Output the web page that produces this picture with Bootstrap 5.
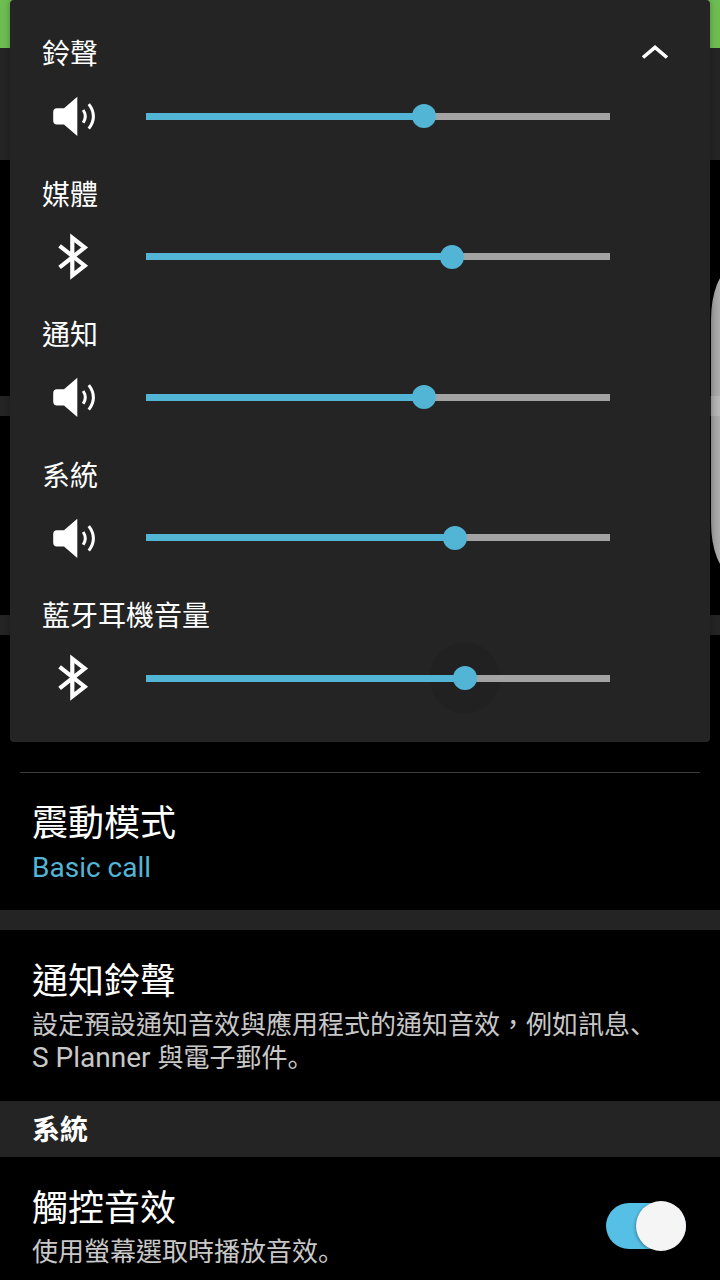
<!DOCTYPE html>
<html lang="zh-Hant">
<head>
<meta charset="utf-8">
<meta name="viewport" content="width=device-width, initial-scale=1">
<title>音效與震動</title>
<link href="https://cdn.jsdelivr.net/npm/bootstrap@5.3.0/dist/css/bootstrap.min.css" rel="stylesheet">
<style>
  :root { --surface: #242424; --accent: #52b5d6; --rail: #a3a3a3; }
  body { font-family: Roboto, "Noto Sans CJK TC", sans-serif; background: #000; color: #fff; }
  .status-strip { height: 48px; background: #6ebd52; }
  .title-strip { height: 112px; background: var(--surface); }
  .divider-strip { height: 20px; background: var(--surface); }
  .row-tall { height: 236px; }
  .row-mid { height: 199px; }
  .row-short { height: 137px; }
  .hairline { height: 1px; margin: 0 20px -1px; background: #3a3a3a; }

  .setting { padding: 25px 34px 26px 32px; }
  .setting-title { font-size: 36px; line-height: 54px; font-weight: 400; margin: 0; }
  .setting-note { font-size: 26px; line-height: 33px; margin: 0; color: #c8c8c8; }
  .setting-note .latin { font-size: 28px; line-height: 1; }
  .setting-note .stop { font-family: "Noto Sans CJK JP", sans-serif; line-height: 1; }
  .setting-value { font-size: 28px; line-height: 33px; color: var(--accent); }
  .group-title { background: var(--surface); font-size: 28px; line-height: 53px; font-weight: 700; padding: 3px 32px 0; margin: 0; }

  .volume-panel { min-height: 742px; margin: 0 10px; padding: 34px 32px 40px; background: var(--surface);
    border-radius: 4px; box-shadow: 0 1px 6px rgba(0, 0, 0, .3); }
  .volume-label { font-size: 28px; line-height: 42px; }
  .volume-control { height: 48px; margin-top: 16px; padding-right: 56px; }
  .volume-icon { width: 48px; height: 48px; margin-left: 7px; margin-right: 37px; }
  .collapse-btn { width: 48px; height: 36px; margin-right: -1px; }

  .volume-range { appearance: none; height: 72px; margin: 0; border: 0; outline: 0;
    --at: calc(12px + (100% - 24px) * var(--level));
    background:
      linear-gradient(to right, var(--accent) calc(100% * var(--level)), var(--rail) 0) center / calc(100% - 24px) 7px no-repeat; }
  .volume-range.touched { background:
      linear-gradient(to right, var(--accent) calc(100% * var(--level)), var(--rail) 0) center / calc(100% - 24px) 7px no-repeat,
      radial-gradient(circle at var(--at) 50%, #212121 35px, transparent 36px); }
  .volume-range::-webkit-slider-runnable-track { height: 24px; background: none; }
  .volume-range::-webkit-slider-thumb { appearance: none; width: 24px; height: 24px; border-radius: 50%; background: var(--accent); }

  .toggle { appearance: none; position: relative; width: 80px; height: 46px; margin: 0; border-radius: 23px; background: #444; }
  .toggle:checked { background: #56bfe5; }
  .toggle::before { content: ""; position: absolute; top: -2px; left: 0; width: 50px; height: 50px; border-radius: 50%;
    background: #f5f5f5; box-shadow: -1px 1px 3px rgba(0, 0, 0, .3); }
  .toggle:checked::before { left: auto; right: 0; }

  .edge-handle { top: 270px; width: 9px; height: 302px; }
  .edge-handle::before { content: ""; display: block; width: 40px; height: 100%; border-radius: 20px / 50px;
    background: linear-gradient(to right, rgba(255, 255, 255, .6), rgba(255, 255, 255, .68) 9px); }
</style>
</head>
<body>
<svg class="d-none" xmlns="http://www.w3.org/2000/svg">
  <symbol id="speaker" viewBox="0 0 48 48">
    <path d="M8 16.300h7L28.300 4.800V44L15 32.500H8Q4.200 32.500 4.200 28.500V20.300Q4.200 16.300 8 16.300Z" fill="#fff"/>
    <path d="M34.200 18Q38.400 24.400 34.200 30.800M39.800 12.200Q49 24.400 39.800 36.600" fill="none" stroke="#fff" stroke-width="3"/>
  </symbol>
  <symbol id="bluetooth" viewBox="0 0 48 48">
    <path d="M10.600 12.800L35.700 32.700L23.300 42.400V4.800L35.700 14.500L10.600 34.400" fill="none" stroke="#fff" stroke-width="4.200"/>
  </symbol>
</svg>

<div class="position-relative vh-100 overflow-hidden">
  <main>
    <div class="status-strip"></div>
    <div class="title-strip"></div>
    <div class="row-tall"></div>
    <div class="divider-strip"></div>
    <div class="row-mid"></div>
    <div class="divider-strip"></div>
    <div class="row-short"></div>
    <div class="hairline"></div>
    <section class="setting">
      <h2 class="setting-title">震動模式</h2>
      <p class="setting-note setting-value">Basic call</p>
    </section>
    <div class="divider-strip"></div>
    <section class="setting">
      <h2 class="setting-title">通知鈴聲</h2>
      <p class="setting-note">設定預設通知音效與應用程式的通知音效，例如訊息<span class="stop" lang="ja">、</span><br><span class="latin">S Planner </span>與電子郵件<span class="stop" lang="ja">。</span></p>
    </section>
    <h2 class="group-title">系統</h2>
    <section class="setting d-flex align-items-center justify-content-between">
      <div>
        <label class="setting-title d-block" for="touch-sound">觸控音效</label>
        <p class="setting-note">使用螢幕選取時播放音效<span class="stop" lang="ja">。</span></p>
      </div>
      <input class="toggle flex-shrink-0" type="checkbox" role="switch" id="touch-sound" checked>
    </section>
  </main>

  <div class="edge-handle position-absolute end-0 overflow-hidden"></div>

  <div class="position-absolute top-0 start-0 end-0">
    <div class="volume-panel d-flex flex-column justify-content-between">
      <div>
        <div class="d-flex justify-content-between">
          <label class="volume-label" for="ring">鈴聲</label>
          <button class="collapse-btn btn p-0 border-0 d-flex align-items-center justify-content-center" type="button" aria-label="收合">
            <svg width="28" height="16" viewBox="0 0 28 16"><path d="M2 13.500L14 3.300L26 13.500" fill="none" stroke="#fff" stroke-width="3.600"/></svg>
          </button>
        </div>
        <div class="volume-control d-flex align-items-center">
          <svg class="volume-icon flex-shrink-0"><use href="#speaker"/></svg>
          <input class="volume-range flex-fill" type="range" id="ring" max="150" value="90" style="--level:.6">
        </div>
      </div>
      <div>
        <label class="volume-label d-block" for="media">媒體</label>
        <div class="volume-control d-flex align-items-center">
          <svg class="volume-icon flex-shrink-0"><use href="#bluetooth"/></svg>
          <input class="volume-range flex-fill" type="range" id="media" max="150" value="99" style="--level:.66">
        </div>
      </div>
      <div>
        <label class="volume-label d-block" for="notice">通知</label>
        <div class="volume-control d-flex align-items-center">
          <svg class="volume-icon flex-shrink-0"><use href="#speaker"/></svg>
          <input class="volume-range flex-fill" type="range" id="notice" max="150" value="90" style="--level:.6">
        </div>
      </div>
      <div>
        <label class="volume-label d-block" for="system">系統</label>
        <div class="volume-control d-flex align-items-center">
          <svg class="volume-icon flex-shrink-0"><use href="#speaker"/></svg>
          <input class="volume-range flex-fill" type="range" id="system" max="150" value="100" style="--level:.667">
        </div>
      </div>
      <div>
        <label class="volume-label d-block" for="headset">藍牙耳機音量</label>
        <div class="volume-control d-flex align-items-center">
          <svg class="volume-icon flex-shrink-0"><use href="#bluetooth"/></svg>
          <input class="volume-range touched flex-fill" type="range" id="headset" max="150" value="103" style="--level:.687">
        </div>
      </div>
    </div>
  </div>
</div>
<script src="https://cdn.jsdelivr.net/npm/bootstrap@5.3.0/dist/js/bootstrap.bundle.min.js"></script>
<script>
  document.querySelectorAll('.volume-range').forEach(function (range) {
    range.addEventListener('input', function () {
      range.style.setProperty('--level', range.value / range.max);
    });
  });
</script>
</body>
</html>
